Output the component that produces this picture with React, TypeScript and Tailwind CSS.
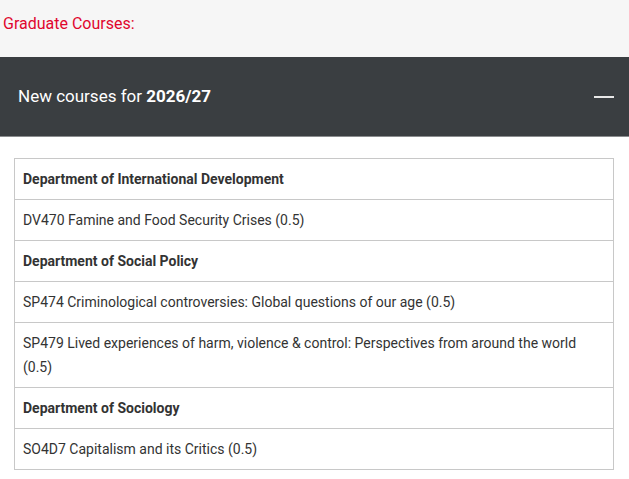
const rows: { text: string; head?: boolean }[] = [
  { text: 'Department of International Development', head: true },
  { text: 'DV470 Famine and Food Security Crises (0.5)' },
  { text: 'Department of Social Policy', head: true },
  { text: 'SP474 Criminological controversies: Global questions of our age (0.5)' },
  {
    text: 'SP479 Lived experiences of harm, violence & control: Perspectives from around the world (0.5)',
  },
  { text: 'Department of Sociology', head: true },
  { text: 'SO4D7 Capitalism and its Critics (0.5)' },
]

export default function App() {
  return (
    <div className="min-h-[479px] w-[629px] bg-white font-['Roboto',sans-serif]">
      <div className="h-[57px] bg-[#f6f6f6] pl-[3px] pt-[13px]">
        <h2 className="text-[16px] leading-[22px] text-[#e0062e]">
          Graduate Courses:
        </h2>
      </div>
      <div className="flex h-[80px] items-center justify-between border-b border-[#8a8c8e] bg-[#3a3e41] pl-[18px] pr-[15px]">
        <span className="text-[17px] text-white">
          New courses for <strong className="font-bold">2026/27</strong>
        </span>
        <span className="block h-[2px] w-[20px] bg-[#e8e8e8]" />
      </div>
      <div className="pl-[14px] pr-[15px] pt-[21px]">
        <table className="w-full border-collapse text-[14px] leading-[24px] text-[#333]">
          <tbody>
            {rows.map((r) => (
              <tr key={r.text}>
                <td
                  className={
                    'border border-[#c8c8c8] px-[8px] py-[8px] ' +
                    (r.head ? 'font-bold' : '')
                  }
                >
                  {r.text}
                </td>
              </tr>
            ))}
          </tbody>
        </table>
      </div>
    </div>
  )
}
